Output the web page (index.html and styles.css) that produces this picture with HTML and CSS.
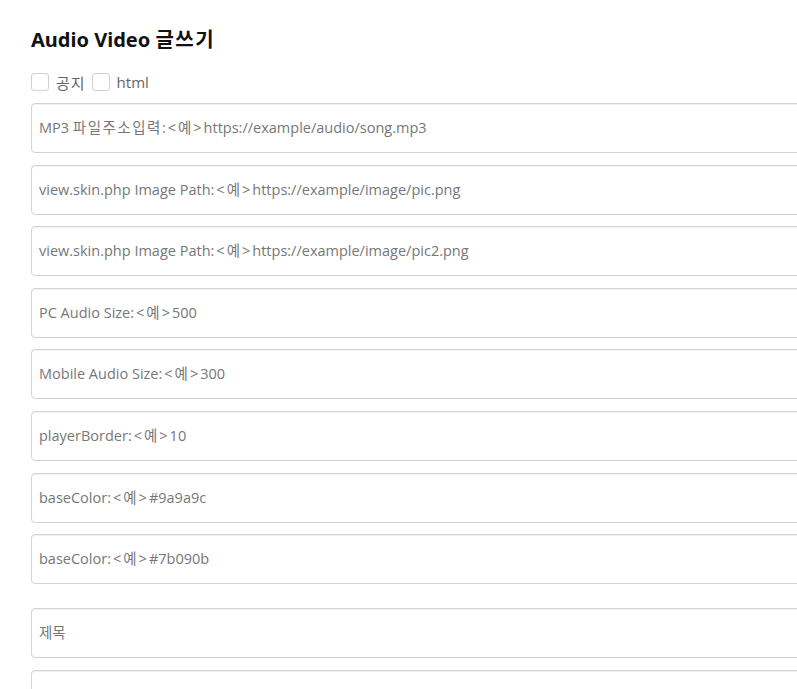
FILE: index.html
```html
<!DOCTYPE html>
<html lang="ko">
<head>
<meta charset="utf-8">
<title>Audio Video 글쓰기</title>
<link rel="stylesheet" href="styles.css">
</head>
<body>
<div class="page">
  <h2 class="title">Audio Video <span class="ko">글쓰기</span></h2>
  <div class="options">
    <label class="opt"><span class="box"></span><span class="opt-text ko">공지</span></label>
    <label class="opt"><span class="box"></span><span class="opt-text">html</span></label>
  </div>
  <div class="fields">
    <div class="field">MP3 <span class="ko">파일주소입력</span>:<span class="ex">&lt;예&gt;</span>https://example/audio/song.mp3</div>
    <div class="field">view.skin.php Image Path:<span class="ex">&lt;예&gt;</span>https://example/image/pic.png</div>
    <div class="field">view.skin.php Image Path:<span class="ex">&lt;예&gt;</span>https://example/image/pic2.png</div>
    <div class="field">PC Audio Size:<span class="ex">&lt;예&gt;</span>500</div>
    <div class="field">Mobile Audio Size:<span class="ex">&lt;예&gt;</span>300</div>
    <div class="field">playerBorder:<span class="ex">&lt;예&gt;</span>10</div>
    <div class="field">baseColor:<span class="ex">&lt;예&gt;</span>#9a9a9c</div>
    <div class="field">baseColor:<span class="ex">&lt;예&gt;</span>#7b090b</div>
  </div>
  <div class="fields second">
    <div class="field">제목</div>
    <div class="field"></div>
  </div>
</div>
</body>
</html>
```
FILE: styles.css
```css
html, body {
  margin: 0;
  padding: 0;
  overflow: hidden;
  background: #fff;
}
body {
  font-family: "Open Sans", "Noto Sans CJK KR", sans-serif;
  color: #000;
}
.page {
  padding: 24px 0 0 31px;
  width: 800px;
}
.title {
  margin: 0;
  font-family: "Noto Sans", "Noto Sans CJK KR", sans-serif;
  font-size: 20px;
  font-weight: 700;
  line-height: 32px;
  height: 32px;
  color: #111;
}
.title .ko {
  letter-spacing: 1.5px;
}
.options {
  display: flex;
  align-items: center;
  height: 18px;
  margin-top: 17px;
  margin-bottom: 12px;
}
.opt {
  display: flex;
  align-items: center;
  margin-right: 6px;
}
.box {
  width: 16px;
  height: 16px;
  border: 1px solid #cfcfd6;
  border-radius: 3px;
  background: #fff;
}
.opt-text {
  margin-left: 7px;
  font-size: 15px;
  color: #666;
}
.opt-text.ko {
  letter-spacing: 1px;
}
.fields {
  display: flex;
  flex-direction: column;
  gap: 11.6px;
}
.second {
  margin-top: 24px;
}
.field {
  box-sizing: border-box;
  height: 50px;
  border: 1px solid #d2d2d8;
  border-radius: 4px;
  box-shadow: inset 0 1px 1px rgba(0,0,0,0.06);
  padding: 0 7px;
  line-height: 48px;
  font-size: 14.5px;
  color: #777;
  white-space: nowrap;
}
.field .ko {
  letter-spacing: 1.5px;
}
.field .ex {
  letter-spacing: 2px;
  padding-left: 2px;
}
```
